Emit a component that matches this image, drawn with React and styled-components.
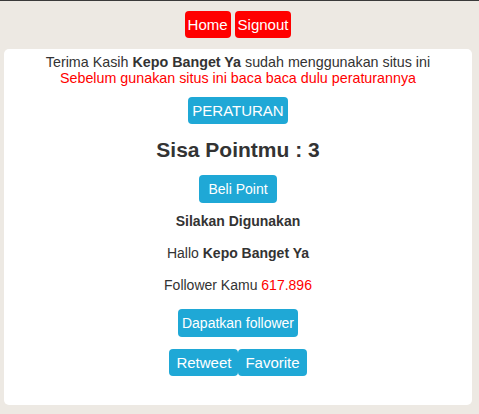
import styled, { createGlobalStyle } from "styled-components";

const GlobalStyle = createGlobalStyle`
  html, body {
    margin: 0;
    padding: 0;
    background: #ede9e3;
  }
  body {
    border-top: 1px solid #3a3a3a;
    font-family: "Liberation Sans", Arial, sans-serif;
    font-size: 14px;
    color: #333333;
  }
`;

const Page = styled.div`
  padding: 0 7px 9px 4px;
`;

const Nav = styled.div`
  display: flex;
  justify-content: center;
  gap: 4px;
  padding: 10px 0 11px 0;
`;

const NavButton = styled.a`
  display: inline-block;
  background: #ff0000;
  color: #ffffff;
  font-size: 15px;
  line-height: 27px;
  height: 27px;
  padding: 0 3px;
  border-radius: 4px;
  text-decoration: none;
`;

const Card = styled.div`
  background: #ffffff;
  border-radius: 5px;
  padding: 5px 0 29px;
  display: flex;
  flex-direction: column;
  align-items: center;
  text-align: center;
`;

const Line = styled.div`
  font-size: 14.3px;
  line-height: 16px;
  color: ${(p) => (p.$red ? "#ff0000" : "#333333")};
`;

const Text = styled.div`
  line-height: 20px;
  margin-top: ${(p) => p.$mt || 0}px;
  font-weight: ${(p) => (p.$bold ? 700 : 400)};
`;

const Red = styled.span`
  color: #ff0000;
`;

const Heading = styled.h2`
  margin: 14px 0 0;
  font-size: 21px;
  line-height: 24px;
  font-weight: 700;
`;

const Button = styled.a`
  display: inline-block;
  margin-top: ${(p) => p.$mt || 0}px;
  background: #1fa8d6;
  color: #ffffff;
  font-size: ${(p) => p.$size || 14}px;
  height: ${(p) => p.$h || 27}px;
  line-height: ${(p) => p.$h || 27}px;
  padding: 0 ${(p) => p.$px || 8}px;
  border-radius: 4px;
  text-decoration: none;
`;

const Group = styled.div`
  display: flex;
  margin-top: 12px;
`;

const App = () => {
  return (
    <>
      <GlobalStyle />
      <Page>
        <Nav>
          <NavButton>Home</NavButton>
          <NavButton>Signout</NavButton>
        </Nav>
        <Card>
          <Line>
            Terima Kasih <b>Kepo Banget Ya</b> sudah menggunakan situs ini
          </Line>
          <Line $red>Sebelum gunakan situs ini baca baca dulu peraturannya</Line>
          <Button $mt={11} $size={15} $px={4}>
            PERATURAN
          </Button>
          <Heading>Sisa Pointmu : 3</Heading>
          <Button $mt={13} $h={28} $px={9}>
            Beli Point
          </Button>
          <Text $mt={8} $bold>
            Silakan Digunakan
          </Text>
          <Text $mt={12}>
            Hallo <b>Kepo Banget Ya</b>
          </Text>
          <Text $mt={12}>
            Follower Kamu <Red>617.896</Red>
          </Text>
          <Button $mt={14} $h={28} $px={4}>
            Dapatkan follower
          </Button>
          <Group>
            <Button $size={15} $px={7}>
              Retweet
            </Button>
            <Button $size={15} $px={7}>
              Favorite
            </Button>
          </Group>
        </Card>
      </Page>
    </>
  );
};

export default App;
